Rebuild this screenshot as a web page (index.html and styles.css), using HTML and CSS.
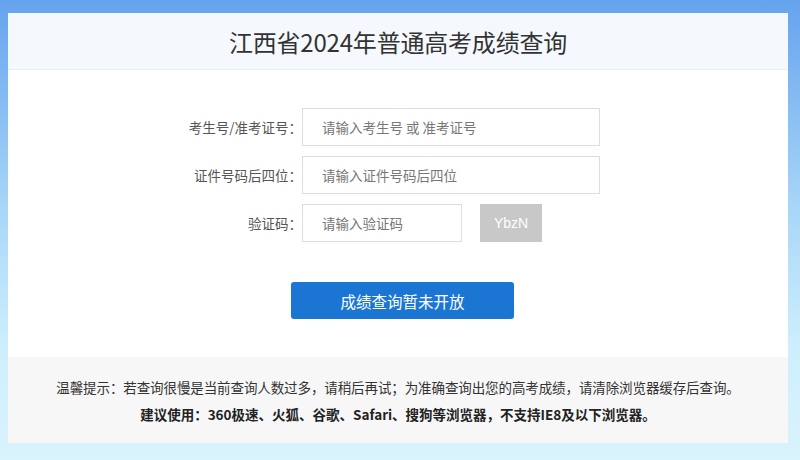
FILE: index.html
```html
<!DOCTYPE html>
<html lang="zh-CN">
<head>
<meta charset="utf-8">
<title>江西省2024年普通高考成绩查询</title>
<link rel="stylesheet" href="styles.css">
</head>
<body>
<div class="card">
  <div class="header">江西省2024年普通高考成绩查询</div>
  <div class="main">
    <div class="form">
      <div class="row">
        <label class="label">考生号/准考证号：</label>
        <input class="input" type="text" placeholder="请输入考生号 或 准考证号">
      </div>
      <div class="row">
        <label class="label">证件号码后四位：</label>
        <input class="input" type="text" placeholder="请输入证件号码后四位">
      </div>
      <div class="row">
        <label class="label">验证码：</label>
        <input class="input short" type="text" placeholder="请输入验证码">
        <div class="captcha">YbzN</div>
      </div>
      <div class="btn-row">
        <button class="btn" type="button">成绩查询暂未开放</button>
      </div>
    </div>
  </div>
  <div class="footer">
    <p class="tip">温馨提示：若查询很慢是当前查询人数过多，请稍后再试；为准确查询出您的高考成绩，请清除浏览器缓存后查询。</p>
    <p class="tip strong">建议使用：360极速、火狐、谷歌、Safari、搜狗等浏览器，不支持IE8及以下浏览器。</p>
  </div>
</div>
</body>
</html>
```

FILE: styles.css
```css
* { box-sizing: border-box; }
html, body { height: 100%; }
body {
  margin: 0;
  background: linear-gradient(to bottom, #66a3ee 0%, #a8d6f7 45%, #cdeefd 75%, #daf3fd 100%);
  font-family: "Noto Sans CJK SC", "Noto Sans", sans-serif;
  overflow: hidden;
}
.card {
  margin: 13px 12px 0 8px;
  height: 430px;
  background: #fff;
  display: flex;
  flex-direction: column;
}
.header {
  height: 57px;
  background: #f5f9fd;
  border-bottom: 1px solid #e6edf5;
  text-align: center;
  font-size: 24px;
  line-height: 58px;
  color: #333;
  letter-spacing: -0.2px;
}
.main {
  flex: 1;
  padding-top: 38px;
}
.form {
  margin-left: 137px;
}
.row {
  display: flex;
  align-items: center;
  margin-bottom: 10px;
  height: 38px;
}
.label {
  width: 157px;
  text-align: right;
  font-size: 13.5px;
  color: #555;
}
.input {
  width: 298px;
  height: 38px;
  border: 1px solid #ddd;
  padding: 0 19px;
  font-family: inherit;
  font-size: 13.5px;
  color: #333;
  outline: none;
  background: #fff;
}
.input::placeholder { color: #777; }
.input.short { width: 160px; }
.captcha {
  margin-left: 18px;
  width: 62px;
  height: 38px;
  background: #c8c8c8;
  color: #fff;
  font-family: "Liberation Sans", Arial, sans-serif;
  font-size: 14px;
  line-height: 38px;
  text-align: center;
}
.btn-row {
  padding-top: 30px;
  padding-left: 146px;
}
.btn {
  width: 223px;
  height: 37px;
  border: none;
  border-radius: 3px;
  background: #1b76d3;
  color: #fff;
  font-family: inherit;
  font-size: 15.5px;
  cursor: pointer;
}
.footer {
  height: 86px;
  background: #f7f7f7;
  padding-top: 17px;
  text-align: center;
}
.tip {
  margin: 0;
  font-size: 13.5px;
  line-height: 27px;
  color: #333;
  letter-spacing: -0.1px;
}
.tip.strong {
  font-weight: bold;
  font-size: 13.5px;
  letter-spacing: 0;
  color: #222;
}
```
